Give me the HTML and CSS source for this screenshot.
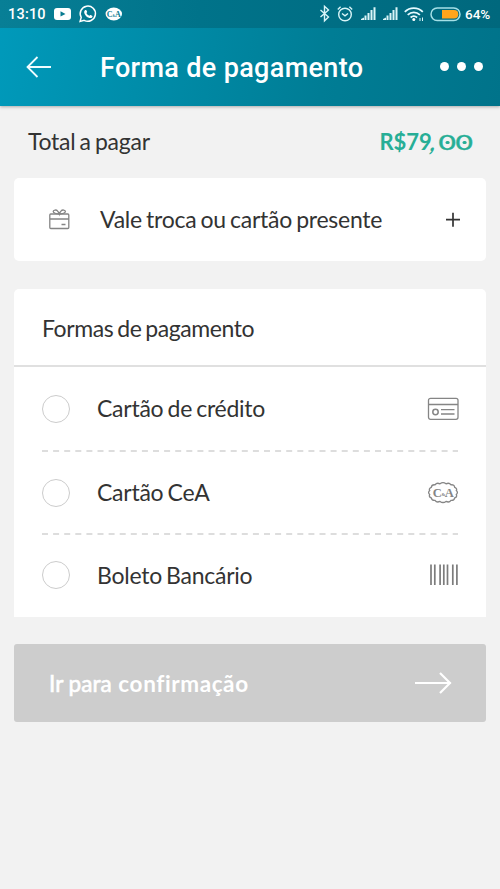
FILE: index.html
```
<!DOCTYPE html>
<html lang="pt-BR">
<head>
<meta charset="utf-8">
<title>Forma de pagamento</title>
<link rel="stylesheet" href="styles.css">
</head>
<body>
<header class="top">
  <div class="status">
    <span class="clock">13:10</span>
    <svg class="st-left" width="68" height="20" viewBox="0 0 68 20">
      <rect x="0" y="4" width="17" height="12" rx="3" fill="#fff"/>
      <path d="M6.500 7.200v5.400l5-2.700z" fill="#087b91"/>
      <path d="M26.100 17.400l1.100-4a7.600 7.600 0 1 1 2.900 2.900z" fill="none" stroke="#fff" stroke-width="1.500"/>
      <path d="M31.100 6.100c.8-.5 1.400-.1 1.800 1.100.4.8.2 1.100-.5 1.800.7 1.400 1.600 2.300 3 2.800.8-1 1.100-1 1.800-.6l1.200.7c.4.4-.2 1.600-1 2-1.400.6-3.800-.4-5.400-2-1.900-1.900-2.600-4.400-.9-5.800z" fill="#fff"/>
      <ellipse cx="59.800" cy="10" rx="8.200" ry="6.400" fill="#fff"/>
      <text x="59.700" y="12.900" class="mini-brand">C<tspan class="mini-amp">&amp;</tspan>A</text>
    </svg>
    <svg class="st-right" width="143" height="20" viewBox="0 0 143 20">
      <path d="M2.500 6l8 7-4 3.800V2.300l4 3.700-8 7" class="thin"/>
      <g class="thin"><circle cx="27" cy="10.500" r="6.300"/><path d="M24 9.500l3 2.300 3-2.300M19.800 5.500l2.800-2.700M31.400 2.800l2.800 2.700"/></g>
      <g fill="#d9f5f8"><path d="M43 15l3-1.500V16h-3zM46.500 11.500h2V16h-2zM49.500 9h2v7h-2zM52.500 6h2v10h-2zM55.500 3.200h2V16h-2zM65 15l3-1.500V16h-3zM68.500 11.500h2V16h-2zM71.500 9h2v7h-2zM74.500 6h2v10h-2zM77.500 3.200h2V16h-2z"/></g>
      <g fill="none" stroke="#e6fbff" stroke-width="1.800"><path d="M86.800 7.800c5-4.900 13-4.900 18 0M89.700 10.800c3.600-3.200 8.600-3.200 12.200 0M92.600 13.500c2-1.700 4.500-1.700 6.500 0"/></g>
      <circle cx="95.800" cy="15.500" r="1.500" fill="#fff"/><path d="M102 14v3M104.500 13.500v3.500" stroke="#d9f5f8"/>
      <rect x="113" y="4" width="29" height="12.500" rx="6.200" fill="none" stroke="#a5e0e7" stroke-width="1.500"/>
      <path d="M124 6h12q4.300 0 4.300 4.200t-4.300 4.300h-12z" fill="#ffa51b"/>
    </svg>
    <span class="percent">64%</span>
  </div>
  <div class="bar">
    <svg width="26" height="22" viewBox="0 0 26 22"><path d="M11.500 1L1.500 11l10 10M1.500 11H25" fill="none" stroke="#effcff" stroke-width="1.800"/></svg>
    <h1>Forma de pagamento</h1>
    <div class="dots"><i></i><i></i><i></i></div>
  </div>
</header>
<main>
  <div class="total"><span class="label">Total a pagar</span><strong class="price">R$79<span class="comma">,</span><span class="zero">0</span><span class="zero">0</span></strong></div>
  <section class="card gift">
    <svg width="21" height="21" viewBox="0 0 21 21"><g class="outline"><rect x=".8" y="5" width="19" height="14.500" rx="1"/><path d="M1 10h19M12.500 15.500h4M10.300 5C7 5 4.200 3.800 4.200 2.500c0-1.700 3.200-2 4.300-.6.900.8 1.500 2 1.800 3.100.3-1.100.9-2.300 1.800-3.100 1.100-1.400 4.300-1.100 4.300.6 0 1.300-2.800 2.500-6.100 2.500"/></g></svg>
    <span class="label">Vale troca ou cartão presente</span>
    <svg class="plus" width="16" height="16" viewBox="0 0 16 16"><path d="M8 .7v14M1 7.700h14" stroke="#333" stroke-width="1.700"/></svg>
  </section>
  <section class="card methods">
    <h2>Formas de pagamento</h2>
    <div class="option">
      <i class="radio"></i><span class="label">Cartão de crédito</span>
      <svg width="32" height="24" viewBox="0 0 32 24"><g class="outline"><rect x="1.500" y="1.300" width="29.500" height="21" rx="2"/><path d="M1.500 7.500H31M14 12.700h13.500M14 17h13.500"/><circle cx="8.500" cy="15" r="2.700" stroke-width="1.500"/></g></svg>
    </div>
    <svg class="dash" width="416" height="2" viewBox="0 0 416 2"><path d="M0 1h416"/></svg>
    <div class="option">
      <i class="radio"></i><span class="label">Cartão CeA</span>
      <svg width="32" height="24" viewBox="0 0 32 24"><path class="outline" d="M13 2.800q3-2.300 6 0 3.200-1.500 5 1 3.400-.4 3.700 2.600 2.700 1 1.600 3.200 2.200 2 0 3.900 1.100 2.600-1.600 3.400-.4 2.800-3.700 2.500-1.800 2.500-5 1-3 2.200-6 0-3.200 1.500-5-1-3.300.3-3.700-2.500-2.700-.8-1.600-3.400-2.200-1.900 0-3.900-1.100-2.200 1.600-3.200.4-3 3.700-2.600 1.800-2.500 5-1z"/><text x="16" y="15.500" class="brand">C<tspan class="amp" dy="-1">&amp;</tspan><tspan dy="1">A</tspan></text></svg>
    </div>
    <svg class="dash" width="416" height="2" viewBox="0 0 416 2"><path d="M0 1h416"/></svg>
    <div class="option">
      <i class="radio"></i><span class="label">Boleto Bancário</span>
      <svg width="32" height="24" viewBox="0 0 32 24"><path d="M4 1.500V22M7.800 1.500V22M13.100 1.500V22M16.800 1.500V22M20.500 1.500V22M25.800 1.500V22M29.900 1.500V22" stroke="#7c7c7c" stroke-width="1.700"/></svg>
    </div>
  </section>
  <button class="confirm" disabled><span class="go">Ir para <b>confirmação</b></span>
    <svg width="38" height="22" viewBox="0 0 38 22"><path d="M1 11h36M26 1l10 10-10 10" fill="none" stroke="#fff" stroke-width="2.200"/></svg>
  </button>
</main>
</body>
</html>
```

FILE: styles.css
```
* { box-sizing: border-box; }
body { margin: 0; height: 889px; background: #f2f2f2; color: #333; font-family: Lato, sans-serif; overflow: hidden; }
svg { flex: none; display: block; }
.top { height: 106px; background: linear-gradient(100deg, #009abb 0%, #007d95 65%, #00738a 100%); box-shadow: 0 1px 3px #aaa; }
.status { height: 28px; padding: 0 8px; display: flex; align-items: center; background: linear-gradient(90deg, #087f96, #00738a 40%, #00687d); color: #fff; font-family: Roboto, sans-serif; }
.clock { width: 46px; font-size: 14.5px; font-weight: 500; letter-spacing: .2px; }
.st-right { margin-left: auto; margin-right: 4px; }
.percent { font-size: 13.5px; font-weight: 500; width: 27px; }
.mini-brand { font: bold 8px "Liberation Serif", serif; fill: #087b91; text-anchor: middle; }
.mini-amp { font-size: 3px; }
.thin { fill: none; stroke: #d9f5f8; stroke-width: 1.4; }
.bar { height: 78px; padding: 0 17px 0 26px; display: flex; align-items: center; }
h1 { margin: 2px 0 0 48px; color: #fff; font: 500 27px Roboto, sans-serif; letter-spacing: .34px; white-space: nowrap; }
.dots { display: flex; gap: 8px; margin-left: auto; margin-bottom: 2px; }
.dots i { width: 9px; height: 9px; border-radius: 50%; background: #fff; }
main { padding: 0 14px; }
.total { height: 72px; padding: 0 14px; display: flex; justify-content: space-between; align-items: center; }
.label, h2 { font-size: 23px; font-weight: 400; line-height: 28px; letter-spacing: -.25px; word-spacing: -1.5px; white-space: nowrap; }
.label { position: relative; top: -.5px; }
.total .label { top: -1px; }
.price { color: #27ae96; font-size: 22px; line-height: 28px; letter-spacing: 0; }
.comma { display: inline-block; margin-right: 2px; transform: skewX(-18deg) scaleY(1.15); }
.zero { display: inline-block; position: relative; width: 16.5px; text-align: center; font-weight: 400; -webkit-text-stroke: .35px #27ae96; transform: scaleX(1.36); }
.zero::after { content: ""; position: absolute; left: 7px; top: 12.5px; width: 2.6px; height: 3.5px; border-radius: 50%; background: #27ae96; }
.card { background: #fff; border-radius: 5px; }
.gift { height: 83px; padding: 0 25px 0 35px; display: flex; align-items: center; }
.gift .label { margin-left: 30px; }
.plus { margin-left: auto; }
.outline { fill: none; stroke: #858585; stroke-width: 1.3; }
.methods { height: 328px; margin-top: 28px; border-radius: 5px 5px 0 0; }
h2 { height: 78px; margin: 0; padding: 25px 28px; border-bottom: 2px solid #e0e0e0; letter-spacing: -.42px; }
.option { height: 81px; padding: 0 27px 0 27.5px; display: flex; align-items: center; }
h2 + .option { height: 83px; }
.option:last-child { height: 80px; }
.option .label { margin-left: 27.5px; }
.option svg { margin-left: auto; }
.radio { width: 28px; height: 28px; border: 1.5px solid #ccc; border-radius: 50%; }
.dash { margin-left: 28px; }
.dash path { stroke: #d2d2d2; stroke-width: 1.5; stroke-dasharray: 6 5.1; }
.brand { font: bold 12.5px "Liberation Serif", serif; fill: #858585; text-anchor: middle; letter-spacing: -.5px; }
.amp { font-size: 5px; }
.confirm { width: 100%; height: 78px; margin-top: 27px; padding: 0 34px 0 35px; border: 0; border-radius: 3px; background: #cdcdcd; color: #fff; display: flex; align-items: center; justify-content: space-between; }
.go { font: 400 22.5px Lato, sans-serif; -webkit-text-stroke: .6px #fff; }
.go b { margin-left: 1px; font-weight: 700; letter-spacing: .6px; -webkit-text-stroke: 0; }
```
